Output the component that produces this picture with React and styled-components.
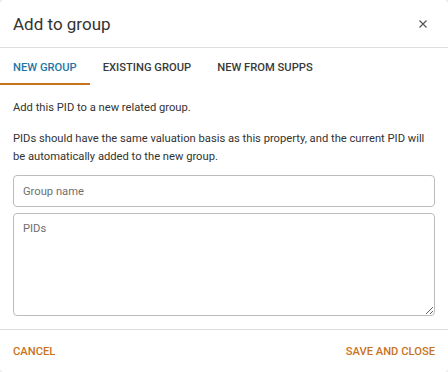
import React, { useState } from 'react'
import styled, { createGlobalStyle } from 'styled-components'

const GlobalStyle = createGlobalStyle`
    html, body {
        margin: 0;
        padding: 0;
        background: #e9e9e9;
        font-family: Roboto, "Liberation Sans", sans-serif;
    }
`

const Dialog = styled.div`
    width: 448px;
    height: 372px;
    box-sizing: border-box;
    background: #fff;
    border-radius: 4px;
    display: flex;
    flex-direction: column;
    overflow: hidden;
`

const Header = styled.div`
    flex-shrink: 0;
    height: 47px;
    display: flex;
    align-items: center;
    justify-content: space-between;
    padding: 0 13px;
    border-bottom: 1px solid #dedede;
`

const Title = styled.h2`
    margin: 0;
    font-size: 17px;
    font-weight: 400;
    color: #333;
`

const CloseButton = styled.button`
    border: none;
    background: none;
    padding: 0;
    width: 20px;
    height: 20px;
    display: flex;
    align-items: center;
    justify-content: center;
    cursor: pointer;
    margin-right: 2px;
`

const Tabs = styled.div`
    flex-shrink: 0;
    display: flex;
    height: 37px;
`

const Tab = styled.button`
    border: none;
    background: none;
    font-family: inherit;
    font-size: 11.2px;
    font-weight: 500;
    text-transform: uppercase;
    color: ${p => (p.$active ? '#1f76a6' : '#3a3a3a')};
    padding: 3px 13px 0;
    height: 37px;
    box-sizing: border-box;
    border-bottom: 2px solid ${p => (p.$active ? '#c8741e' : 'transparent')};
    cursor: pointer;
`

const Body = styled.div`
    flex: 1;
    padding: 14px 13px 0;
    display: flex;
    flex-direction: column;
`

const Text = styled.p`
    margin: 0 0 13px;
    font-size: 11.2px;
    line-height: 18px;
    color: #333;
`

const Field = styled.input`
    flex-shrink: 0;
    box-sizing: border-box;
    width: 100%;
    height: 32px;
    border: 1px solid #bcbcbc;
    border-radius: 4px;
    padding: 0 9px;
    font-family: inherit;
    font-size: 11.2px;
    color: #333;
    margin-top: -4px;
    outline: none;
    &::placeholder { color: #6f6f6f; }
`

const Area = styled.textarea`
    flex-shrink: 0;
    box-sizing: border-box;
    width: 100%;
    height: 103px;
    border: 1px solid #bcbcbc;
    border-radius: 4px;
    padding: 8px 9px;
    font-family: inherit;
    font-size: 11.2px;
    color: #333;
    margin-top: 6px;
    resize: vertical;
    outline: none;
    &::placeholder { color: #6f6f6f; }
`

const Footer = styled.div`
    flex-shrink: 0;
    height: 42px;
    border-top: 1px solid #dedede;
    display: flex;
    align-items: center;
    justify-content: space-between;
    padding: 0 13px;
`

const TextButton = styled.button`
    border: none;
    background: none;
    padding: 0;
    font-family: inherit;
    font-size: 11.2px;
    font-weight: 500;
    text-transform: uppercase;
    color: #c8741e;
    cursor: pointer;
`

export default function App() {
    const [tab, setTab] = useState('new')

    return (
        <>
            <GlobalStyle />
            <Dialog>
                <Header>
                    <Title>Add to group</Title>
                    <CloseButton aria-label="close">
                        <svg width="10" height="10" viewBox="0 0 10 10">
                            <path d="M1.5 1.5 L8.5 8.5 M8.5 1.5 L1.5 8.5" stroke="#555" strokeWidth="1.2" />
                        </svg>
                    </CloseButton>
                </Header>

                <Tabs>
                    <Tab $active={tab === 'new'} onClick={() => setTab('new')}>New group</Tab>
                    <Tab $active={tab === 'existing'} onClick={() => setTab('existing')}>Existing group</Tab>
                    <Tab $active={tab === 'supps'} onClick={() => setTab('supps')}>New from supps</Tab>
                </Tabs>

                <Body>
                    <Text>Add this PID to a new related group.</Text>
                    <Text>
                        PIDs should have the same valuation basis as this property, and the current PID will
                        be automatically added to the new group.
                    </Text>
                    <Field placeholder="Group name" />
                    <Area placeholder="PIDs" />
                </Body>

                <Footer>
                    <TextButton>Cancel</TextButton>
                    <TextButton>Save and close</TextButton>
                </Footer>
            </Dialog>
        </>
    )
}
